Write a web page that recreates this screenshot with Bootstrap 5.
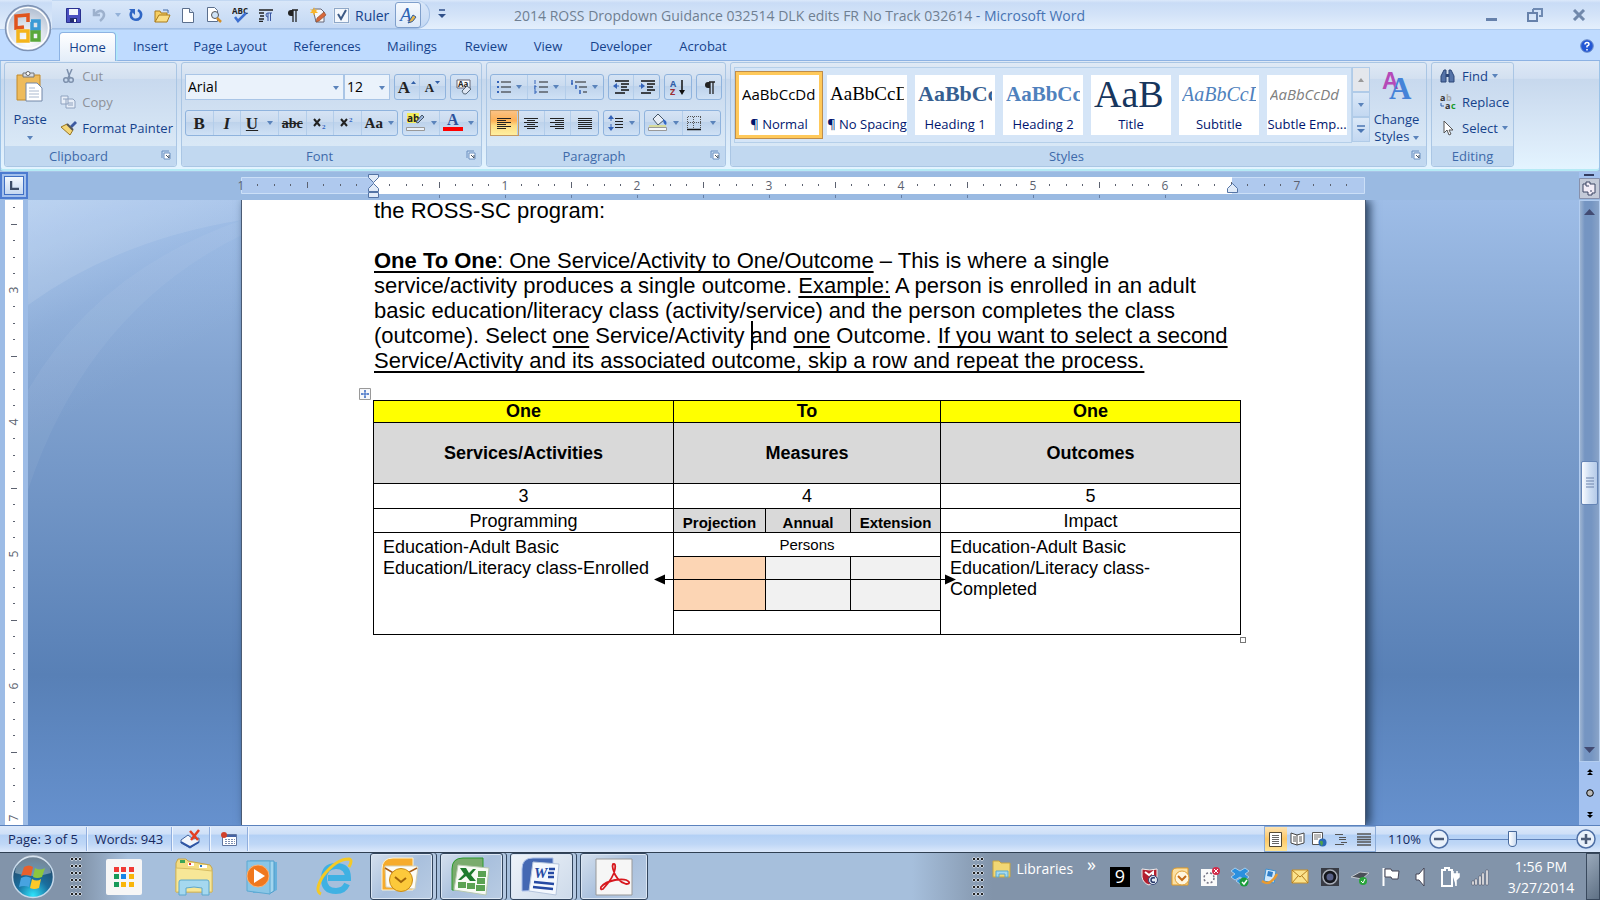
<!DOCTYPE html>
<html lang="en">
<head>
<meta charset="utf-8">
<meta name="viewport" content="width=device-width, initial-scale=1">
<title>2014 ROSS Dropdown Guidance 032514 DLK edits FR No Track 032614 - Microsoft Word</title>
<link href="https://cdn.jsdelivr.net/npm/bootstrap@5.3.0/dist/css/bootstrap.min.css" rel="stylesheet">
<style>
:root{--ui:"Open Sans","Noto Sans",sans-serif;--ink:#15428b}
body{font-family:var(--ui);font-size:13px;line-height:17px;color:var(--ink);background:#9abae2;overflow:hidden}
body>header,body>nav,body>section,body>footer,.hruler{flex-shrink:0}
button,select,input{font:inherit;color:inherit}
button{background:none;border:0;padding:0;line-height:17px}
svg{display:block;flex:none}
a{color:inherit;text-decoration:none}
/* title bar */
.titlebar{height:30px;background:linear-gradient(#dce9fa 0,#c9dcf6 10%,#d3e3f8 50%,#e4effc 100%);border-bottom:1px solid #aecbef}
.quick{height:29px;margin-left:52px;padding:1px 8px 0 8px;border:1px solid #a3c0e6;border-left:0;border-top-color:#c3d8f2;border-radius:0 14px 14px 0;background:linear-gradient(#d9e7f9,#c3d8f4)}
.quick>*{width:26px;display:flex;justify-content:center;align-items:center;height:26px}
.quick .slim{width:11px}
.quick .rulerbox{width:64px;gap:6px;justify-content:flex-start;padding-left:3px;font-size:14px;margin:0}
.rulerbox input{appearance:none;width:15px;height:15px;margin:0;border:1px solid #8fa8c8;background:#f4f8fd;outline:1px solid #dde8f5}
.rulerbox span.tickbox{position:relative;display:block}
.rulerbox input{display:block}
.rulerbox svg{position:absolute;left:2px;top:1px;pointer-events:none}
.quick .pressed{border:1px solid #7f9fcb;border-radius:3px;background:linear-gradient(#f5f9fe,#dce9f9)}
.doctitle{font-size:14px;line-height:20px;color:#6f7f92;white-space:nowrap;padding:2px 0 0 60px}
.doctitle b{font-weight:400;color:#4673b3}
.winbtns{gap:29px;padding-right:14px}
.orb{position:absolute;left:4px;top:4px;z-index:5}
/* tabs */
.tabs{height:31px;background:#bfdbff;padding:2px 6px 0 59px;border-bottom:1px solid #8db2e3}
.tabs a{height:28px;display:flex;align-items:center;justify-content:center;white-space:nowrap}
.tabs a.on{border:1px solid #8db2e3;border-bottom:0;border-radius:4px 4px 0 0;background:linear-gradient(#fff,#e3edf9);height:29px;box-shadow:1px 0 2px #a8f0f5}
/* ribbon */
.ribbon{height:110px;padding:1px 4px 2px 3px;gap:4px;background:linear-gradient(#dde8f6 0,#d2e0f2 16%,#c7d8ed 17%,#dcebf9 75%,#e3f4ff 100%);border:1px solid #9cc3e8;border-top:0;border-bottom:2px solid #b5eaf5;border-radius:0 0 4px 4px}
.rgroup{border:1px solid #aac6e4;border-radius:3px;display:flex;flex-direction:column;background:linear-gradient(#dfe9f5 0,#d3e0f0 15%,#c8d9ee 16%,#d9e8f6 80%)}
.rgroup>.body{flex:1;padding:0 3px;min-height:0}
.rgroup>footer{height:20px;background:#c1d8f0;color:#3e6aaa;text-align:center;position:relative;line-height:20px;border-radius:0 0 3px 3px}
.rgroup>footer button{position:absolute;right:5px;top:4px}
.bar{display:flex;height:26px;border:1px solid #8fb3dd;border-radius:3px;background:linear-gradient(#d5e3f4 0,#cadbef 45%,#bdd2eb 46%,#cfe1f5 100%)}
.bar button{flex:1 1 26px;display:flex;align-items:center;justify-content:center;gap:5px;border-right:1px solid #b3cdea}
.bar button.tight{gap:1px}
.bar button.wide{flex-grow:0;flex-basis:38px}
.bar button:last-child{border-right:0}
.bar .on{background:linear-gradient(#fbc284,#fdb157 40%,#fddb83 60%,#ffef9f);box-shadow:0 0 0 1px #c69a62}
.fmt{font-family:"Liberation Serif",serif;font-size:17px;color:#222}
.dd{width:0;height:0;border:3px solid transparent;border-top:4px solid #5a83bb;border-bottom:0;display:inline-block;flex:none}
.combo{height:26px;border:1px solid #a9c5e6;background:#eaf2fb;position:relative;display:flex;align-items:center}
.combo select{appearance:none;border:0;background:transparent;color:#000;width:100%;padding:0 2px;font-size:14px;line-height:20px;outline:0}
.combo .dd{position:absolute;right:4px;top:11px;pointer-events:none}
.cmd{display:flex;align-items:center;gap:4px;height:26px;white-space:nowrap}
.cmd svg{width:18px}
.off{color:#8d9199}
.gallery{width:618px;height:76px;padding:7px 4px;border:1px solid #b5cfe9;background:#d5e5f7;gap:8px}
.tile{width:80px;height:60px;background:#fff;color:#00156e;overflow:hidden;white-space:nowrap;text-align:center;display:flex;flex-direction:column;justify-content:space-between;padding:0}
.tile i{font-style:normal;height:38px;display:flex;align-items:center;line-height:38px;color:#000;margin:0 3px;overflow:hidden}
.tile span{line-height:21px;height:21px;overflow:hidden}
.tile.sel{box-shadow:0 0 0 3px #ffc95a,0 0 0 4px #bf8d4a}
.tile .ser{font-family:"Liberation Serif",serif}
.gscroll{width:18px}
.gscroll button{height:25px;width:18px;border:1px solid #b0cbe8;background:linear-gradient(#dbe8f7,#c3d8f1);display:flex;justify-content:center;align-items:center}
/* rulers and canvas */
.hruler{height:29px;background:#9abae2;border-top:1px solid #a9c4e6}
.tabsel{width:28px;height:27px;border:2px solid #4c7bd0;background:#a3c0ec;padding:2px}
.tabsel span{display:flex;width:20px;height:19px;border:1px solid #3f6fc4;background:linear-gradient(#f4f8fd,#c5d8f1);align-items:center;justify-content:center}
.desk{background:linear-gradient(#9ebde7 0,#83a4d1 27%,#5880b6 76%,#6691ce 100%);position:relative;overflow:hidden;min-height:0;flex:1 1 0}
.vruler{width:28px;background:#9dbce6;padding-left:5px;flex:none}
.vruler svg{background:#fff}
.sheetbox{flex:1;min-width:0;position:relative;display:flex;justify-content:center;background:linear-gradient(150deg,rgba(205,226,250,.45) 0,rgba(190,215,245,.1) 9%,transparent 16%)}
.swoosh{position:absolute;left:0;top:0}
.sheet{width:1125px;flex:none;background:#fff;border:solid #4a5b74;border-width:0 1px 0 1px;box-shadow:4px 0 9px #28405f;padding:0 124px 0 132px;color:#000;font-family:"Liberation Sans",Arial,sans-serif;position:relative}
.sheet p{font-size:22px;line-height:25px;margin:0 0 25px;white-space:nowrap}
.sheet p.topcut{margin-top:-2px}
.sheet p.intro{margin-bottom:27px}
.sheet u{text-decoration-thickness:2px;text-underline-offset:3px;text-decoration-skip-ink:none}
.caret{border-left:2px solid #000;margin-right:-2px;padding:2px 0}
.tablebox{position:relative;margin-left:-1px}
.ross{width:100%;table-layout:fixed;border-collapse:collapse;font-size:18px;line-height:21px;text-align:center}
.ross td,.ross th{border:1px solid #000;padding:0;text-align:center;vertical-align:middle}
.ross .hd th{background:#ff0}
.ross .gr th,.ross .sub{background:#d9d9d9}
.ross .sub{font-size:15px;vertical-align:bottom;line-height:19px}
.ross td.low{vertical-align:bottom}
.ross td.long{text-align:left;vertical-align:top;padding:4px 9px}
.arrow{position:absolute;left:281px;top:172px}
.handle{position:absolute;left:-14px;top:-12px}
.corner{position:absolute;right:-5px;bottom:-8px;width:6px;height:6px;border:1px solid #777;background:#fff}
/* scroll bar */
.vscroll{width:21px;background:#a4c2f0;flex:none}
.vscroll .track{flex:1;border:1px solid #b3cdf0;background:linear-gradient(90deg,#9db4d2 0,#7595c2 25%,#7595c2 60%,#8aa4c8)}
.thumb{height:44px;width:17px;border:1px solid #6484b5;border-radius:2px;background:linear-gradient(90deg,#fafcff,#cfdff3 50%,#b5cae8)}
/* status bar */
.status{height:27px;border-top:1px solid #5b82bd;background:linear-gradient(#dbe8fa 0,#cfe0f7 30%,#b3d0f5 36%,#bfd7f6 70%,#dbe8fb 100%);color:#15285e}
.cell{height:24px;display:flex;align-items:center;justify-content:center;border-right:1px solid #90aede;box-shadow:1px 0 #eef5fe}
.views{height:26px;border:1px solid #8aabd8}
.views button{width:22px;display:flex;justify-content:center;align-items:center}
.views .on{background:linear-gradient(#fde3b1,#fcc766 50%,#ffe596)}
.zoomer{appearance:none;width:127px;height:20px;margin:0;background:linear-gradient(#5f83bb,#5f83bb) 0 10px/100% 1px no-repeat}
.zoomer::-webkit-slider-thumb{appearance:none;width:9px;height:16px;border:1px solid #47699c;background:linear-gradient(90deg,#fff,#cbdcf2);border-radius:1px 1px 5px 5px}
/* taskbar */
.task{height:48px;border-top:1px solid #2f3f52;background:linear-gradient(90deg,#8294aa 0,#8294aa 5%,#a6bfdc 8%,#a6bfdc 57%,#8294aa 62%);color:#fff}
.grip{width:12px;height:40px;background:radial-gradient(circle at 2px 2px,#222 1px,#cdd6e2 1.5px,transparent 2px) 0 0/4px 7px}
.tb{display:flex;align-items:center;justify-content:center;height:47px}
.tb.open{border:1px solid #33465e;border-radius:3px;background:linear-gradient(135deg,#d5e0ee,#a9c0dd 50%,#b9cce3);box-shadow:inset 0 0 0 1px #dbe6f3}
.tb.stack{width:63px;margin-right:7px;box-shadow:inset 0 0 0 1px #dbe6f3,3px 0 0 #b5c9e2,4px 0 0 #33465e}
.tb.front{background:linear-gradient(135deg,#eef3f9,#cddaea)}
.tray{gap:10px}
.tray button{width:20px;height:22px;display:flex;align-items:center;justify-content:center}
.tray .nine{background:#000;font-size:18px;color:#fff;height:20px;margin-top:1px}
.chev{font-size:18px;margin:0 14px 24px 14px}
.clock{width:90px;margin-left:6px;font-size:14px;line-height:21px;text-align:center}
.peek{width:14px;height:47px;border:1px solid #39495d;background:linear-gradient(135deg,#9aa9bb,#5f7185)}
</style>
</head>
<body class="vh-100 d-flex flex-column">
<button class="orb" aria-label="Office Button"><svg width="48" height="48" viewBox="0 0 48 48"><defs><radialGradient id="ob" cx=".5" cy=".8" r=".8"><stop offset="0" stop-color="#fff"/><stop offset=".5" stop-color="#dde3ec"/><stop offset="1" stop-color="#a9b8cd"/></radialGradient></defs><circle cx="24" cy="24" r="22.500" fill="url(#ob)" stroke="#7e93b5" stroke-width="1.500"/><circle cx="24" cy="24" r="20.500" fill="none" stroke="#fff" stroke-width="1.500"/><g fill="none" stroke-width="3.500"><path d="M20 23l-8 1V12l12-1v7" stroke="#e0541d"/><path d="M27 17h8v8h-7v-7" stroke="#3a9ad5"/><path d="M14 27h10v10H14z" stroke="#f4b41a"/><path d="M28 28h7v8h-7z" stroke="#59a83a"/></g></svg></button>

<header class="titlebar d-flex align-items-start">
 <div class="quick d-flex align-items-center">
  <button aria-label="Save"><svg width="15" height="15"><path d="M.5.5h13l1 1v13H.5z" fill="#4a4fc0" stroke="#29308f"/><path d="M3 1h9v6H3z" fill="#f2f5fb"/><path d="M4 10h7v4H4z" fill="#222c70"/><path d="M8 11h2v3H8z" fill="#fff"/></svg></button>
  <button aria-label="Undo"><svg width="14" height="14"><path d="M2 1v6h6" fill="none" stroke="#9db1cd" stroke-width="2.500"/><path d="M3 6q4-5 8-2 3 4-3 9" fill="none" stroke="#9db1cd" stroke-width="2.500"/></svg></button>
  <span class="slim"><span class="dd opacity-50"></span></span>
  <button aria-label="Repeat"><svg width="14" height="14"><path d="M3 3q-3 5 1 8 4 2 7-1 3-5-2-8" fill="none" stroke="#2f66c5" stroke-width="2.500"/><path d="M0 1h6v6z" fill="#2f66c5"/></svg></button>
  <button aria-label="Open"><svg width="17" height="15"><path d="M1 14V3h5l1 2h6v3" fill="#f6cf62" stroke="#a97a1b"/><path d="M1 14l4-7h11l-3 7z" fill="#fbdf85" stroke="#a97a1b"/><path d="M9 2h5v3" fill="none" stroke="#456ca8"/></svg></button>
  <button aria-label="New"><svg width="12" height="15"><path d="M.5.5h7l4 4v10H.5z" fill="#fff" stroke="#5b6f8d"/><path d="M7.500.5v4h4" fill="#d6e2f2" stroke="#5b6f8d"/></svg></button>
  <button aria-label="Print Preview"><svg width="16" height="16"><path d="M1.500.5h7l3 3v11h-10z" fill="#fff" stroke="#5b6f8d"/><circle cx="9" cy="8" r="3.500" fill="#cfe3f7" stroke="#555"/><path d="M11 11l4 4" stroke="#d59029" stroke-width="2.500"/></svg></button>
  <button aria-label="Spelling"><svg width="17" height="16"><text x="0" y="7" font-size="8" font-weight="700" fill="#222">ABC</text><path d="M3 10l3 4 8-8" fill="none" stroke="#3d6fd0" stroke-width="2.500"/></svg></button>
  <button aria-label="Text direction"><svg width="14" height="13"><path d="M0 1h14M0 4h5M1 7h4M0 10h5M0 12.500h4" stroke="#222" stroke-width="1.300"/><path d="M9 4v8M11.500 4v8M13 4H9a2 2 0 0 0 0 4" stroke="#3a56a0" fill="none"/></svg></button>
  <button aria-label="Show marks"><svg width="11" height="13"><path d="M5 1h6M6 1v12M9 1v12" stroke="#222" stroke-width="1.300"/><path d="M6 1H4a3 3 0 0 0 0 6h2z" fill="#222"/></svg></button>
  <button aria-label="Edit points"><svg width="17" height="16"><path d="M3 2h8l3 3v10H6z" fill="#f5f7fb" stroke="#667"/><path d="M4 0l1 3 3-1-2 2 2 2-3 0-1 3-1-3-3 0 2-2-2-2 3 1z" fill="#f7b52c"/><path d="M6 15l1-4 7-6 2 3-7 6z" fill="#d8683b" stroke="#8a4a2a" stroke-width=".6"/></svg></button>
  <label class="rulerbox"><span class="tickbox"><input type="checkbox" checked><svg width="12" height="12"><path d="M2 5l3 5 5-9" fill="none" stroke="#3d5a85" stroke-width="2"/></svg></span>Ruler</label>
  <button class="pressed" aria-label="Styles"><svg width="18" height="18"><text x="1" y="15" font-family="Liberation Serif,serif" font-style="italic" font-size="19" fill="#2e62b2">A</text><path d="M9 17q5 0 8-6l-3-2z" fill="#e7b64a" stroke="#345ea0"/></svg></button>
 </div>
 <button class="mx-2 mt-2" aria-label="Customize"><svg width="8" height="12"><path d="M1 2h6" stroke="#31518a" stroke-width="1.500"/><path d="M0 6h8l-4 4z" fill="#31518a"/></svg></button>
 <div class="doctitle flex-fill align-self-center">2014 ROSS Dropdown Guidance 032514 DLK edits FR No Track 032614 <b>- Microsoft Word</b></div>
 <div class="winbtns d-flex align-items-center align-self-center">
  <button aria-label="Minimize"><svg width="12" height="14"><path d="M0 10h11v3H0z" fill="#6681ab"/></svg></button>
  <button aria-label="Restore"><svg width="16" height="15"><path d="M6 2h9v7h-3M6 2v3" fill="none" stroke="#6f8ab2" stroke-width="2"/><path d="M1 6h9v8H1z" fill="none" stroke="#6681ab" stroke-width="2"/></svg></button>
  <button aria-label="Close"><svg width="14" height="12"><path d="M2 1l10 10M12 1L2 11" stroke="#7088ab" stroke-width="3"/></svg></button>
 </div>
</header>

<nav class="tabs d-flex align-items-start">
 <a class="on" href="#" style="width:57px">Home</a><a href="#" style="width:69px">Insert</a><a href="#" style="width:90px">Page Layout</a><a href="#" style="width:104px">References</a><a href="#" style="width:66px">Mailings</a><a href="#" style="width:82px">Review</a><a href="#" style="width:42px">View</a><a href="#" style="width:104px">Developer</a><a href="#" style="width:60px">Acrobat</a>
 <button class="ms-auto align-self-center" aria-label="Help"><svg width="14" height="14"><circle cx="7" cy="7" r="6.300" fill="#2257d5" stroke="#6f8fc9"/><path d="M5 5.500q0-2 2-2t2 1.700q0 1-2 2V8.500M7 10v1.500" fill="none" stroke="#fff" stroke-width="1.500"/></svg></button>
</nav>

<section class="ribbon d-flex">
 <div class="rgroup" style="width:173px"><div class="body d-flex">
   <button class="d-flex flex-column align-items-center pt-2" style="width:50px"><svg width="28" height="32"><path d="M1 4h23v25H1z" fill="#eebb5b" stroke="#c28a2c"/><path d="M7 2h11v4H7z" fill="#d8dce2" stroke="#777"/><circle cx="12" cy="2.500" r="2" fill="#fff" stroke="#666"/><path d="M10 12h11l5 5v13H10z" fill="#fff" stroke="#7287a8"/><path d="M13 17h6M13 20h10M13 23h10M13 26h10" stroke="#aab9cf"/></svg><span class="mt-2">Paste</span><span class="dd mt-2"></span></button>
   <div class="ps-2">
    <button class="cmd off"><svg width="18" height="15"><path d="M7 0l3 9M12 0L8 9" stroke="#7d90ac" stroke-width="1.500"/><circle cx="6" cy="11" r="2.300" fill="none" stroke="#7d90ac" stroke-width="1.500"/><circle cx="11" cy="11" r="2.300" fill="none" stroke="#7d90ac" stroke-width="1.500"/></svg>Cut</button>
    <button class="cmd off"><svg width="18" height="14"><path d="M1 1h7v8H1zM6 4h7l2 2v7H6z" fill="#e7eef8" stroke="#8fa2bf"/><path d="M8 8h5M8 10h5M3 4h3" stroke="#8fa2bf"/></svg>Copy</button>
    <button class="cmd"><svg width="18" height="16"><path d="M10 6l5-5 2 2-5 5z" fill="#3d5aa0"/><path d="M7 4l6 6-3 5L1 7z" fill="#f4d778" stroke="#9a7620"/><path d="M7 4l6 6" stroke="#555" stroke-width="2"/></svg>Format Painter</button>
   </div></div>
  <footer><span class="pe-4">Clipboard</span><button aria-label="Clipboard options"><svg width="10" height="10"><path d="M1 8V1h7" fill="none" stroke="#6b8fc0"/><path d="M3 3h6v6H3z" fill="#fff" stroke="#6b8fc0"/><path d="M5 5l3 3V5" stroke="#456" fill="none"/></svg></button></footer>
 </div>

 <div class="rgroup" style="width:301px"><div class="body d-flex flex-column justify-content-between" style="padding:11px 3px 10px">
  <div class="d-flex gap-1">
   <div class="d-flex flex-fill"><label class="combo" style="width:159px"><select aria-label="Font"><option>Arial</option></select><span class="dd"></span></label><label class="combo flex-fill"><select aria-label="Font size"><option>12</option></select><span class="dd"></span></label></div>
   <div class="bar" style="width:52px"><button class="fmt fw-bold tight" aria-label="Grow font">A<svg width="5" height="14"><path d="M0 4l2.500-3L5 4z" fill="#315fa8"/></svg></button><button class="fmt fw-bold tight" style="font-size:13px" aria-label="Shrink font">A<svg width="5" height="14"><path d="M0 1h5L2.500 4z" fill="#315fa8"/></svg></button></div>
   <div class="bar" style="width:28px"><button aria-label="Clear formatting"><svg width="17" height="17"><path d="M1 1h13v8H1z" fill="#fff" stroke="#667"/><text x="2" y="8" font-size="8" font-weight="700" fill="#222">Aa</text><path d="M6 12l5-5 4 3-5 5q-3 1-4-3z" fill="#dfe7f3" stroke="#567"/></svg></button></div>
  </div>
  <div class="d-flex gap-1">
   <div class="bar flex-fill"><button class="fmt fw-bold">B</button><button class="fmt fst-italic fw-bold">I</button><button class="fmt wide fw-bold"><u>U</u><span class="dd ms-1"></span></button><button class="fmt fw-bold" style="font-size:14px"><s>abc</s></button><button class="fmt fw-bold" aria-label="Subscript"><svg width="14" height="14"><path d="M1 3l6 7M7 3l-6 7" stroke="#222" stroke-width="2"/><text x="9" y="13" font-size="7" font-weight="700" fill="#2f62c0">2</text></svg></button><button class="fmt fw-bold" aria-label="Superscript"><svg width="14" height="14"><path d="M1 3l6 7M7 3l-6 7" stroke="#222" stroke-width="2"/><text x="9" y="6" font-size="7" font-weight="700" fill="#2f62c0">2</text></svg></button><button class="fmt fw-bold" style="font-size:15px;flex-basis:34px">Aa<span class="dd"></span></button></div>
   <div class="bar" style="width:76px"><button aria-label="Highlight"><svg width="20" height="20"><path d="M1 0h12v10H1z" fill="#f4ee5c"/><text x="1" y="9" font-size="10" font-weight="700" fill="#222">ab</text><path d="M10 9l6-7 2 2-6 6z" fill="#9db7df" stroke="#456"/><path d="M.5 14.500h18v3H.5z" fill="#eaf1fa" stroke="#999"/></svg><span class="dd"></span></button><button aria-label="Font colour"><svg width="20" height="20"><text x="4" y="12" font-family="Liberation Serif,serif" font-size="16" font-weight="700" fill="#2d539c">A</text><path d="M0 14h20v4H0z" fill="red"/></svg><span class="dd"></span></button></div>
  </div></div>
  <footer><span class="pe-4">Font</span><button aria-label="Font options"><svg width="10" height="10"><path d="M1 8V1h7" fill="none" stroke="#6b8fc0"/><path d="M3 3h6v6H3z" fill="#fff" stroke="#6b8fc0"/><path d="M5 5l3 3V5" stroke="#456" fill="none"/></svg></button></footer>
 </div>

 <div class="rgroup" style="width:240px"><div class="body d-flex flex-column justify-content-between" style="padding:11px 3px 10px">
  <div class="d-flex gap-1">
   <div class="bar" style="width:114px"><button aria-label="Bullets"><svg width="14" height="14"><path d="M4 2h10M4 7h10M4 12h10" stroke="#222"/><path d="M0 1h2v2H0zM0 6h2v2H0zM0 11h2v2H0z" fill="#3362b8"/></svg><span class="dd"></span></button><button aria-label="Numbering"><svg width="14" height="14"><path d="M5 2h9M5 7h9M5 12h9" stroke="#222"/><path d="M1 0v4M0 6h2v1H0v2h2M0 11h2v2H0" stroke="#3362b8" fill="none"/></svg><span class="dd"></span></button><button aria-label="Multilevel"><svg width="16" height="14"><path d="M4 2h11M8 7h8M12 12h4" stroke="#222"/><path d="M1 0v4M5 5v4M9 10v4M0 4h2" stroke="#3362b8" stroke-width="1.500"/></svg><span class="dd"></span></button></div>
   <div class="bar" style="width:52px"><button aria-label="Decrease indent"><svg width="16" height="14"><path d="M2 1h14M8 4h8M8 7h6M8 10h8M2 13h10" stroke="#111" stroke-width="1.500"/><path d="M0 6l4-3v6z" fill="#3362b8"/><path d="M3 6h3" stroke="#3362b8"/></svg></button><button aria-label="Increase indent"><svg width="16" height="14"><path d="M2 1h14M8 4h8M8 7h6M8 10h8M2 13h10" stroke="#111" stroke-width="1.500"/><path d="M6 6L2 3v6z" fill="#3362b8"/><path d="M0 6h3" stroke="#3362b8"/></svg></button></div>
   <div class="bar" style="width:28px"><button aria-label="Sort"><svg width="16" height="17"><text x="0" y="8" font-size="9" font-weight="700" fill="#315fa8">A</text><text x="0" y="16" font-size="9" font-weight="700" fill="#9c2f35">Z</text><path d="M12 1v12" stroke="#111" stroke-width="1.500"/><path d="M9 11h6l-3 5z" fill="#111"/></svg></button></div>
   <div class="bar flex-fill"><button aria-label="Paragraph marks"><svg width="11" height="13"><path d="M5 1h6M6 1v12M9 1v12" stroke="#222" stroke-width="1.300"/><path d="M6 1H4a3 3 0 0 0 0 6h2z" fill="#222"/></svg></button></div>
  </div>
  <div class="d-flex gap-1">
   <div class="bar" style="width:109px"><button class="on" aria-label="Align left"><svg width="14" height="12"><path d="M0 1.500h14M0 3.500h9M0 5.500h14M0 7.500h9M0 9.500h14M0 11.500h9" stroke="#222"/></svg></button><button aria-label="Centre"><svg width="14" height="12"><path d="M0 1.500h14M3 3.500h8M0 5.500h14M3 7.500h8M0 9.500h14M3 11.500h8" stroke="#222"/></svg></button><button aria-label="Align right"><svg width="14" height="12"><path d="M0 1.500h14M5 3.500h9M0 5.500h14M5 7.500h9M0 9.500h14M5 11.500h9" stroke="#222"/></svg></button><button aria-label="Justify"><svg width="14" height="12"><path d="M0 1.500h14M0 3.500h14M0 5.500h14M0 7.500h14M0 9.500h14M0 11.500h14" stroke="#222"/></svg></button></div>
   <div class="bar" style="width:37px"><button aria-label="Line spacing"><svg width="16" height="16"><path d="M7 3.500h8M7 6.500h8M7 9.500h8M7 12.500h8" stroke="#222"/><path d="M3 0l3 4H0zM3 16l3-4H0z" fill="#3362b8"/><path d="M3 3v10" stroke="#3362b8" stroke-dasharray="3 3"/></svg><span class="dd"></span></button></div>
   <div class="bar" style="width:77px"><button aria-label="Shading"><svg width="20" height="20"><path d="M5 6l5-5 6 6-6 5z" fill="#e8eef7" stroke="#456"/><path d="M15 6q5 2 3 6-3-1-3-6z" fill="#3266c2"/><path d="M.5 14.500h18v3H.5z" fill="#f5f8fc" stroke="#999"/><path d="M1 13h17" stroke="#eae14d"/></svg><span class="dd"></span></button><button aria-label="Borders"><svg width="14" height="15"><path d="M1 .5h13M1 6.500h13M.5 1v11M6.500 1v11M13.500 1v11" stroke="#555" stroke-dasharray="1 1"/><path d="M0 13.500h14" stroke="#111" stroke-width="1.500"/></svg><span class="dd ms-1"></span></button></div>
  </div></div>
  <footer><span class="pe-4">Paragraph</span><button aria-label="Paragraph options"><svg width="10" height="10"><path d="M1 8V1h7" fill="none" stroke="#6b8fc0"/><path d="M3 3h6v6H3z" fill="#fff" stroke="#6b8fc0"/><path d="M5 5l3 3V5" stroke="#456" fill="none"/></svg></button></footer>
 </div>

 <div class="rgroup" style="width:697px"><div class="body d-flex" style="padding-top:4px">
  <div class="gallery d-flex">
   <button class="tile sel"><i style="font-size:15px">AaBbCcDd</i><span>¶ Normal</span></button>
   <button class="tile"><i class="ser" style="font-size:19px">AaBbCcD</i><span>¶ No Spacing</span></button>
   <button class="tile"><i class="ser fw-bold" style="font-size:22px;color:#365f91">AaBbCc</i><span>Heading 1</span></button>
   <button class="tile"><i class="ser fw-bold" style="font-size:21px;color:#4f81bd">AaBbCc</i><span>Heading 2</span></button>
   <button class="tile"><i class="ser" style="font-size:38px;color:#17365d">AaB</i><span>Title</span></button>
   <button class="tile"><i class="ser fst-italic" style="font-size:20px;color:#4f81bd">AaBbCcD</i><span>Subtitle</span></button>
   <button class="tile"><i class="fst-italic" style="font-size:15px;color:#808080">AaBbCcDd</i><span>Subtle Emp...</span></button>
  </div>
  <div class="gscroll"><button aria-label="Up" style="background:#e4e7ec"><svg width="6" height="4"><path d="M0 4h6L3 0z" fill="#999"/></svg></button><button aria-label="Down"><span class="dd"></span></button><button aria-label="More"><svg width="8" height="9"><path d="M0 1h8" stroke="#4b76b3" stroke-width="1.500"/><path d="M0 4h8L4 8z" fill="#4b76b3"/></svg></button></div>
  <button class="flex-fill d-flex flex-column align-items-center"><svg width="32" height="32" class="mt-1"><text x="1" y="18" font-family="Liberation Sans" font-size="23" font-weight="700" fill="#b54ab8">A</text><text x="8" y="28" font-family="Liberation Serif" font-size="31" font-weight="700" fill="#4583d8">A</text></svg><span class="mt-2">Change</span><span>Styles <span class="dd align-middle"></span></span></button>
  </div>
  <footer><span class="pe-4">Styles</span><button aria-label="Styles options"><svg width="10" height="10"><path d="M1 8V1h7" fill="none" stroke="#6b8fc0"/><path d="M3 3h6v6H3z" fill="#fff" stroke="#6b8fc0"/><path d="M5 5l3 3V5" stroke="#456" fill="none"/></svg></button></footer>
 </div>

 <div class="rgroup" style="width:83px"><div class="body ps-2">
   <button class="cmd"><svg width="16" height="14"><path d="M1 13V7l3-6h2v12zM9 13V1h2l3 6v6z" fill="#5573a8" stroke="#2c4677"/><path d="M6 5h3v3H6z" fill="#2c4677"/></svg>Find <span class="dd"></span></button>
   <button class="cmd"><svg width="18" height="16"><text x="0" y="7" font-size="9" font-weight="700" fill="#333">a</text><text x="6" y="7" font-size="9" font-weight="700" fill="#aaa">b</text><text x="5" y="15" font-size="9" font-weight="700" fill="#333">a</text><text x="11" y="15" font-size="9" font-weight="700" fill="#189a2c">c</text><path d="M1 9v3h3" fill="none" stroke="#315fa8"/></svg>Replace</button>
   <button class="cmd"><svg width="18" height="16"><path d="M4 1v12l3-3 2 5 2-1-2-4h4z" fill="#fff" stroke="#555"/></svg>Select <span class="dd"></span></button>
  </div><footer>Editing</footer></div>
</section>

<div class="hruler d-flex">
 <button class="tabsel" aria-label="Tab selector"><span><svg width="9" height="9"><path d="M1 0v8h8" fill="none" stroke="#3c4c66" stroke-width="2.500"/></svg></span></button>
 <div class="flex-fill d-flex justify-content-center">
 <svg width="1133" height="28" font-family="Open Sans,sans-serif" font-size="12" fill="#5c6270" text-anchor="middle">
  <defs><pattern id="inch" width="132" height="28" patternUnits="userSpaceOnUse" x="4"><path d="M16 12h1v2h-1zM33 12h1v2h-1zM49 12h1v2h-1zM82 12h1v2h-1zM99 12h1v2h-1zM115 12h1v2h-1z" fill="#5c6270"/><path d="M66 10h1v6h-1z" fill="#5c6270"/></pattern>
  <pattern id="stop" width="66" height="28" patternUnits="userSpaceOnUse" x="4"><path d="M0 23h1v3H0z" fill="#667fa6"/></pattern></defs>
  <path d="M4.500 5.500h1123v16H4.500z" fill="#afc9ee" stroke="#cbdff7"/><path d="M137 5h858v17H137z" fill="#fff"/><path d="M14 5h1110v17H14z" fill="url(#inch)"/><path d="M180 22h800v5H180z" fill="url(#stop)"/>
  <text x="4" y="18">1</text><text x="268" y="18">1</text><text x="400" y="18">2</text><text x="532" y="18">3</text><text x="664" y="18">4</text><text x="796" y="18">5</text><text x="928" y="18">6</text><text x="1060" y="18">7</text>
  <g fill="#e1ebf8" stroke="#5474a5"><path d="M131.500 2.500h10v3l-5 5-5-5zM131.500 19.500v-3l5-5 5 5v3zM131.500 20.500h10v5h-10zM990.500 20.500v-4l5-5 5 5v4z"/></g>
 </svg></div>
 <button style="width:21px" aria-label="View ruler"><svg width="21" height="28"><path d="M0 0h21v6H0z" fill="#a4c2f0"/><path d="M5 2h10v2H5z" fill="#333c60"/><path d="M.5 6.500h20v20H.5z" fill="#c4cad8" stroke="#8790ab"/><path d="M4 13V12h3v-2h4v2h5v9h-3v2H9v-3H4z" fill="#f3edf7" stroke="#3c4665"/><path d="M7 12v2h3M12 20v-2" fill="none" stroke="#3c4665"/></svg></button>
</div>

<main class="desk d-flex">
 <div class="vruler"><svg width="18" height="2000" font-family="Open Sans,sans-serif" font-size="12" fill="#5c6270" text-anchor="middle"><defs><pattern id="vin" width="18" height="132" patternUnits="userSpaceOnUse" y="90"><path d="M8 16h2v1H8zM8 33h2v1H8zM8 49h2v1H8zM8 82h2v1H8zM8 99h2v1H8zM8 115h2v1H8z" fill="#5c6270"/><path d="M6 66h6v1H6z" fill="#5c6270"/></pattern></defs><path d="M0 0h18v2000H0z" fill="url(#vin)"/><text transform="translate(13 90) rotate(-90)">3</text><text transform="translate(13 222) rotate(-90)">4</text><text transform="translate(13 354) rotate(-90)">5</text><text transform="translate(13 486) rotate(-90)">6</text><text transform="translate(13 618) rotate(-90)">7</text></svg></div>
 <div class="sheetbox">
  <svg class="swoosh" width="214" height="330"><path d="M0 105Q90 40 214 20V0H0z" fill="#fff" opacity=".1"/><path d="M0 290Q60 110 214 35V20Q70 70 0 190z" fill="#fff" opacity=".05"/></svg>
  <article class="sheet">
   <p class="topcut">the ROSS-SC program:</p>
   <p class="intro"><u><b>One To One</b>: One Service/Activity to One/Outcome</u> – This is where a single<br>service/activity produces a single outcome. <u>Example:</u> A person is enrolled in an adult<br>basic education/literacy class (activity/service) and the person completes the class<br>(outcome). Select <u>one</u> Service/Activity <span class="caret"></span>and <u>one</u> Outcome. <u>If you want to select a second</u><br><u>Service/Activity and its associated outcome, skip a row and repeat the process.</u></p>
   <div class="tablebox">
    <table class="ross">
     <colgroup><col style="width:300px"><col style="width:92px"><col style="width:85px"><col style="width:90px"><col></colgroup>
     <tr class="hd" style="height:22px"><th>One</th><th colspan="3">To</th><th>One</th></tr>
     <tr class="gr" style="height:61px"><th>Services/Activities</th><th colspan="3">Measures</th><th>Outcomes</th></tr>
     <tr style="height:25px"><td>3</td><td colspan="3">4</td><td>5</td></tr>
     <tr style="height:24px"><td class="low">Programming</td><th class="sub">Projection</th><th class="sub">Annual</th><th class="sub">Extension</th><td class="low">Impact</td></tr>
     <tr style="height:24px"><td class="long" rowspan="3">Education-Adult Basic<br>Education/Literacy class-Enrolled</td><td colspan="3" style="font-size:15px">Persons</td><td class="long" rowspan="3">Education-Adult Basic<br>Education/Literacy class-<br>Completed</td></tr>
     <tr style="height:54px"><td style="background:#fcd5b4"></td><td style="background:#f1f1f1"></td><td style="background:#f1f1f1"></td></tr>
     <tr style="height:24px"><td colspan="3"></td></tr>
    </table>
    <svg class="arrow" width="302" height="14"><path d="M5 7.500h290" stroke="#000"/><path d="M0 7.500l11-5v10zM302 7.500l-11-5v10z"/></svg>
    <svg class="handle" width="12" height="12"><path d="M.5.5h11v11H.5z" fill="#f4f6fa" stroke="#999"/><path d="M6 2v8M2 6h8M5 3h2M5 9h2M3 5v2M9 5v2" stroke="#2f62c0"/></svg>
    <span class="corner"></span>
   </div>
  </article>
 </div>
 <div class="vscroll d-flex flex-column align-items-center">
  <div class="track w-100 d-flex flex-column align-items-center py-2"><svg width="11" height="6"><path d="M0 6h11L5.500 0z" fill="#424b73"/></svg><div style="flex:242"></div><div class="thumb d-flex align-items-center justify-content-center"><svg width="8" height="11"><path d="M0 1h8M0 4h8M0 7h8M0 10h8" stroke="#6c83ab"/></svg></div><div style="flex:239"></div><svg width="11" height="6"><path d="M0 0h11L5.500 6z" fill="#424b73"/></svg></div>
  <div class="d-flex flex-column align-items-center justify-content-around" style="height:63px"><svg width="6" height="7"><path d="M3 0l3 3H0zM3 3l3 3H0z"/></svg><svg width="8" height="8"><circle cx="4" cy="4" r="3.300" fill="#bbb" stroke="#000"/></svg><svg width="6" height="7"><path d="M3 4L0 1h6zM3 7L0 4h6z"/></svg></div>
 </div>
</main>

<footer class="status d-flex align-items-center">
 <span class="cell" style="width:87px">Page: 3 of 5</span><span class="cell" style="width:85px">Words: 943</span>
 <button class="cell" style="width:38px" aria-label="Proofing"><svg width="22" height="20"><path d="M1 11l7-5 5 4 6-1v4l-9 6-9-5z" fill="#f2f6fc" stroke="#42639c"/><path d="M1 13l9 5 9-5" fill="none" stroke="#2f55a5" stroke-width="2"/><path d="M10 2l8 9M19 1l-8 10" stroke="#e43d22" stroke-width="2.500"/></svg></button>
 <button class="cell" style="width:38px" aria-label="Macro"><svg width="16" height="14"><path d="M1.500 2.500h14v11h-14z" fill="#fff" stroke="#6076a0"/><path d="M2 3h13v2H2z" fill="#4563a5"/><path d="M4 7.500h10M4 9.500h10M4 11.500h10" stroke="#7b8db2" stroke-dasharray="2 1"/><circle cx="3" cy="3" r="3" fill="#d0402c"/></svg></button>
 <div class="ms-auto d-flex align-items-center">
  <div class="views d-flex"><button class="on" aria-label="Print layout"><svg width="13" height="15"><path d="M.5.5h12v14H.5z" fill="#fff" stroke="#554a33"/><path d="M3 3.500h7M3 5.500h7M3 7.500h7M3 9.500h7M3 11.500h7" stroke="#666"/></svg></button><button aria-label="Full screen reading"><svg width="15" height="14"><path d="M1 1l6 2 7-2v10l-7 2-6-2z" fill="#fff" stroke="#444"/><path d="M7 3v10M3 5h3M3 7h3M3 9h3M9 5h3M9 7h3M9 9h3" stroke="#555"/></svg></button><button aria-label="Web layout"><svg width="15" height="15"><path d="M.5.5h10v12H.5z" fill="#fff" stroke="#555"/><path d="M2 3h7M2 5h7M2 7h4" stroke="#777"/><circle cx="10.500" cy="10.500" r="4" fill="#2b68b5"/><path d="M8 9q3-1 3 2l-1 3q-2-1-2-5z" fill="#4fa24a"/></svg></button><button aria-label="Outline"><svg width="13" height="13"><path d="M0 1.500h8M4 4.500h7M4 6.500h7M6 9.500h6M0 11.500h9" stroke="#555"/></svg></button><button aria-label="Draft"><svg width="14" height="13"><path d="M0 1h14M0 4h14M0 6.500h14M0 9h14M0 12h14" stroke="#555" stroke-width="1.500"/></svg></button></div>
  <label class="ps-2 ms-1 pe-2" for="zoom">110%</label>
  <button aria-label="Zoom out"><svg width="20" height="20"><circle cx="10" cy="10" r="9" fill="#e9f1fb" stroke="#4e6fa5" stroke-width="1.500"/><path d="M5 10h10" stroke="#4c5c78" stroke-width="2.500"/></svg></button>
  <input class="zoomer" id="zoom" type="range" min="0" max="100" value="50">
  <button class="me-1" aria-label="Zoom in"><svg width="20" height="20"><circle cx="10" cy="10" r="9" fill="#e9f1fb" stroke="#4e6fa5" stroke-width="1.500"/><path d="M5 10h10M10 5v10" stroke="#4c5c78" stroke-width="2.500"/></svg></button>
 </div>
</footer>

<footer class="task d-flex align-items-center">
 <button class="tb" style="width:66px" aria-label="Start"><svg width="44" height="44"><defs><radialGradient id="so" cx=".5" cy=".95" r=".9"><stop offset="0" stop-color="#2fe3fb"/><stop offset=".45" stop-color="#1a6f9f"/><stop offset="1" stop-color="#24425f"/></radialGradient></defs><circle cx="22" cy="22" r="20.500" fill="url(#so)" stroke="#c5d8ea" stroke-width="1.500"/><path d="M4 18a18 18 0 0 1 36 0q-18 6-36 0z" fill="#fff" opacity=".35"/><path d="M13 12q5-3 9 0l-2 9q-5-2-10 0z" fill="#e8602c"/><path d="M24 13q5 3 10 0l-3 9q-5 2-9 0z" fill="#8cc63f"/><path d="M10 23q5-3 10 0l-2 9q-5-2-10 0z" fill="#47a3e0"/><path d="M21 24q5 3 9 0l-2 9q-5 2-9 0z" fill="#fcc928"/></svg></button>
 <span class="grip mx-1"></span>
 <button class="tb" style="width:75px" aria-label="Apps"><svg width="36" height="36"><rect width="36" height="36" rx="2" fill="#f6f6f6"/><path d="M8 8h5v5H8zM15 8h5v5h-5zM23 8h5v5h-5z" fill="#f03a35"/><path d="M8 15h5v5H8zM8 23h5v5H8z" fill="#179a59"/><path d="M15 15h5v5h-5z" fill="#1684e8"/><path d="M23 15h5v5h-5zM15 23h5v5h-5zM23 23h5v5h-5z" fill="#f9b509"/></svg></button>
 <button class="tb" style="width:66px" aria-label="Explorer"><svg width="40" height="40"><path d="M2 6l2-4h8l2 2 22 4 2 3v24H2z" fill="#f3dd82" stroke="#c6a548"/><path d="M6 3h5v3H6z" fill="#3aa556"/><path d="M14 6h6v3h-6z" fill="#fff"/><path d="M15 6h2v2h-2z" fill="#d33"/><path d="M25 8h8v3h-8z" fill="#fff"/><path d="M26 8h2v2h-2z" fill="#27c"/><path d="M2 11l18 1 18 2v21H2z" fill="#f7e797" stroke="#d8bd62"/><path d="M5 38V25q0-2 2-2h26q2 0 2 2v13h-7v-7q-8-2-16 0v7z" fill="#a5d8ef" stroke="#5da7cc"/></svg></button>
 <button class="tb" style="width:70px" aria-label="Media player"><svg width="34" height="36"><path d="M8 3h24v28l-6 3H8z" fill="#67b1dc"/><path d="M5 2h24v30l-5 3z" fill="#a2d5ee" stroke="#4f9dcb"/><path d="M2 2h23v33L2 32z" fill="#8ac6e6" stroke="#5ba8d2"/><circle cx="13" cy="17" r="11" fill="#f0781e" stroke="#f9b277"/><path d="M9 10l11 7-11 7z" fill="#fff"/></svg></button>
 <button class="tb" style="width:73px" aria-label="Internet Explorer"><svg width="38" height="40"><path d="M13 21h20q0-12-12-12T9 22q0 12 12 12 8 0 11-7" fill="none" stroke="#3fb1e3" stroke-width="6"/><path d="M6 37q-7-3 2-18Q21 2 34 2q4 1 0 8" fill="none" stroke="#f5c926" stroke-width="3"/></svg></button>
 <button class="tb open stack" aria-label="Outlook"><svg width="40" height="40" class="me-1"><path d="M2 33V12Q2 1 13 1h20v32z" fill="#f6ab2b" stroke="#fff3d0"/><path d="M5 9h31l2 1-3 22-29-2z" fill="#fdfcf6" stroke="#d4cfb5"/><path d="M5 11l15 9 17-9" fill="none" stroke="#a85d17" stroke-width="1.500"/><circle cx="21" cy="23" r="11.500" fill="#fcc93b" stroke="#c98a16"/><path d="M15 20l6 5 5-4" fill="none" stroke="#a0640a" stroke-width="2"/></svg></button>
 <button class="tb open stack" aria-label="Excel"><svg width="40" height="40" class="me-1"><path d="M2 33V12Q2 1 13 1h20v32z" fill="#7aab6d" stroke="#2a9a2e"/><path d="M8 8l31 3-3 27-32-5z" fill="#f7faf4" stroke="#b7c9b0"/><path d="M28 14h8v6h-8zM27 21h8v6h-8zM26 28h9v6h-9zM17 26h8v6h-8zM8 25h8v6H8z" fill="#5ba253"/><path d="M10 11h6l3 5 4-4h3l-5 6 5 6h-6l-4-5-5 4H8l6-6z" fill="#1d7a2c"/></svg></button>
 <button class="tb open stack front" aria-label="Word"><svg width="40" height="40" class="me-1"><path d="M2 34V12Q2 1 13 1h20v32z" fill="#4468b3" stroke="#a8bde8"/><path d="M13 5l26 2-3 31-27-4z" fill="#f4f8fe" stroke="#b5c5dd"/><text x="14" y="21" font-family="Liberation Serif,serif" font-size="15" font-style="italic" font-weight="700" fill="#2549a3">W</text><path d="M29 12h6M28 16h6M28 20h6M14 25l20 2M13 30l20 2" stroke="#2549a3" stroke-width="2.500"/></svg></button>
 <button class="tb open" style="width:68px" aria-label="Acrobat"><svg width="38" height="38"><path d="M1 1h36v36H1z" fill="#f6f6f6" stroke="#999"/><path d="M18 6q3-1 2 5-1 8-12 20-3 1-2-2 4-5 14-7 11-2 14 2 1 2-3 2-10-3-13-15-1-3 0-5z" fill="none" stroke="#d7191f" stroke-width="1.800"/></svg></button>
 <div class="ms-auto d-flex align-items-center">
  <span class="grip"></span>
  <a href="#" class="d-flex align-items-center ms-2 mb-3 gap-1"><svg width="20" height="18"><path d="M1 3V1h6l2 2h9v14H1z" fill="#f2d774" stroke="#c8a541"/><path d="M4 17v-6h12v6h-3v-3H7v3z" fill="#a3d9f0" stroke="#5aa7cf"/></svg><span style="font-size:14px">Libraries</span></a>
  <span class="chev">»</span>
  <div class="tray d-flex">
   <button class="nine">9</button>
   <button aria-label="Security"><svg width="18" height="19"><path d="M1 2q8 2 15 0v8q-2 6-8 8-6-2-7-8z" fill="#b41f2e" stroke="#eee"/><path d="M4 5l4 3 4-3v4" fill="none" stroke="#fff" stroke-width="2"/><circle cx="12" cy="13" r="4.500" fill="#e5ecf4" stroke="#347"/><path d="M14 11q-4-1-4 2t4 2" fill="none" stroke="#236" stroke-width="1.500"/></svg></button>
   <button aria-label="Outlook"><svg width="19" height="20"><path d="M1 18V6q0-5 5-5h11v17z" fill="#fbe0a4" stroke="#e39b22"/><circle cx="11" cy="11" r="7" fill="#fff6de" stroke="#e0a036"/><path d="M7 9l4 4 4-4" fill="none" stroke="#c46c19" stroke-width="2"/></svg></button>
   <button aria-label="Sync"><svg width="20" height="20"><path d="M1 2h16v17H1z" fill="#fafafa"/><circle cx="9" cy="11" r="5" fill="none" stroke="#778" stroke-width="1.500" stroke-dasharray="2 2"/><circle cx="16" cy="4" r="4" fill="#d22c4a"/><path d="M14 2l4 4M18 2l-4 4" stroke="#fff"/></svg></button>
   <button aria-label="Dropbox"><svg width="20" height="20"><path d="M5 1l5 3 5-3 4 3-4 3 4 3-4 3-5-3-5 3-4-3 4-3-4-3zM6 14l4-3 4 3-4 3z" fill="#2b90df" stroke="#c9e5fa" stroke-width=".7"/><circle cx="14" cy="15" r="4.500" fill="#1a9d3c"/><path d="M12 15l2 2 3-4" stroke="#fff" stroke-width="1.500" fill="none"/></svg></button>
   <button aria-label="Update"><svg width="20" height="20"><path d="M6 2l10 2-2 12-10-2z" fill="#cfe8fb" stroke="#3c8fcf"/><path d="M8 4l5 1-1 5-5-1z" fill="#2f7fcb"/><path d="M2 14q8 6 15-7" fill="none" stroke="#e99a2f" stroke-width="2.500"/></svg></button>
   <button aria-label="Mail"><svg width="18" height="16"><path d="M1 1h16v13H1z" fill="#fbe38d" stroke="#c8912a"/><path d="M1 1l8 7 8-7M1 14l6-7M17 14l-6-7" fill="none" stroke="#b57e1e"/></svg></button>
   <button aria-label="Camera"><svg width="18" height="18"><path d="M0 0h18v18H0z" fill="#383b44"/><circle cx="9" cy="9" r="7" fill="#15171e" stroke="#a8adb8" stroke-width="1.500"/><circle cx="9" cy="9" r="3.500" fill="#575f86"/></svg></button>
   <button aria-label="Eject hardware"><svg width="20" height="18"><path d="M1 9l9-5 9 1-7 6z" fill="#4a4f58" stroke="#c5cad0"/><circle cx="13" cy="13" r="4" fill="#28a53a"/><path d="M11 13l2 2 2-4" fill="none" stroke="#fff"/></svg></button>
   <button aria-label="Action centre"><svg width="20" height="20"><path d="M3.500 1v18" stroke="#fff" stroke-width="2"/><path d="M5 2h6l1 2h7l-1 8h-6l-1-2H5z" fill="#fff" stroke="#445"/></svg></button>
   <button aria-label="Volume"><svg width="16" height="20"><path d="M4 7h3l5-6v18l-5-6H4z" fill="#fff" stroke="#445"/></svg></button>
   <button aria-label="Power"><svg width="20" height="20"><path d="M2 3h3V1h4v2h3v16H2z" fill="#8294aa" stroke="#fff" stroke-width="2"/><path d="M13 4v3M17 4v3M12 7h7v3l-3 3v6" fill="#fff" stroke="#fff" stroke-width="1.500"/></svg></button>
   <button aria-label="Network"><svg width="18" height="18"><path d="M1 13h2v4H1zM4 11h2v6H4zM8 8h2v9H8zM11 5h2v12h-2zM15 2h2v15h-2z" fill="#fff" stroke="#445" stroke-width=".5"/></svg></button>
  </div>
  <div class="clock">1:56 PM<br>3/27/2014</div>
  <button class="peek" aria-label="Show desktop"></button>
 </div>
</footer>
<script src="https://cdn.jsdelivr.net/npm/bootstrap@5.3.0/dist/js/bootstrap.bundle.min.js"></script>
</body>
</html>
